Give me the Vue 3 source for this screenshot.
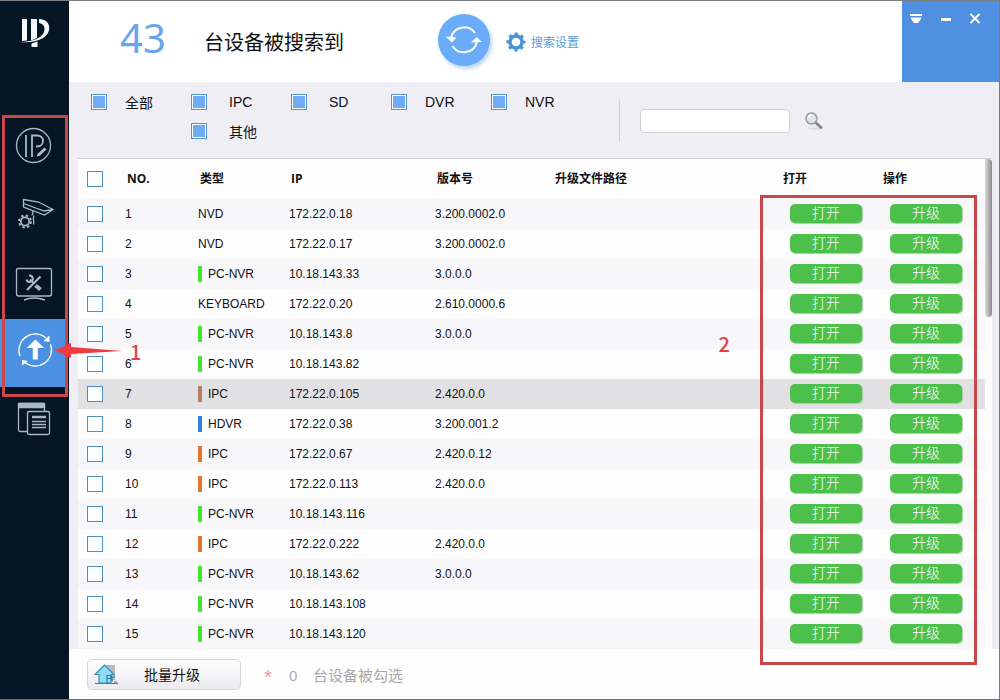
<script setup>
import { ref } from 'vue'

const filters = ref([
  { id: 'all', label: '全部', checked: true },
  { id: 'ipc', label: 'IPC', checked: true },
  { id: 'sd', label: 'SD', checked: true },
  { id: 'dvr', label: 'DVR', checked: true },
  { id: 'nvr', label: 'NVR', checked: true },
  { id: 'other', label: '其他', checked: true },
])

const devices = ref([
  { type: 'NVD', mark: '', ip: '172.22.0.18', version: '3.200.0002.0' },
  { type: 'NVD', mark: '', ip: '172.22.0.17', version: '3.200.0002.0' },
  { type: 'PC-NVR', mark: 'green', ip: '10.18.143.33', version: '3.0.0.0' },
  { type: 'KEYBOARD', mark: '', ip: '172.22.0.20', version: '2.610.0000.6' },
  { type: 'PC-NVR', mark: 'green', ip: '10.18.143.8', version: '3.0.0.0' },
  { type: 'PC-NVR', mark: 'green', ip: '10.18.143.82', version: '' },
  { type: 'IPC', mark: 'brown', ip: '172.22.0.105', version: '2.420.0.0', current: true },
  { type: 'HDVR', mark: 'blue', ip: '172.22.0.38', version: '3.200.001.2' },
  { type: 'IPC', mark: 'orange', ip: '172.22.0.67', version: '2.420.0.12' },
  { type: 'IPC', mark: 'orange', ip: '172.22.0.113', version: '2.420.0.0' },
  { type: 'PC-NVR', mark: 'green', ip: '10.18.143.116', version: '' },
  { type: 'IPC', mark: 'orange', ip: '172.22.0.222', version: '2.420.0.0' },
  { type: 'PC-NVR', mark: 'green', ip: '10.18.143.62', version: '3.0.0.0' },
  { type: 'PC-NVR', mark: 'green', ip: '10.18.143.108', version: '' },
  { type: 'PC-NVR', mark: 'green', ip: '10.18.143.120', version: '' },
])
</script>

<template>
  <div class="window">
    <aside class="sidebar">
      <svg class="logo" viewBox="0 0 69 114" aria-hidden="true">
        <path d="M22 19h5v21.500l-5 .5zM31 19h6v19l-6 2.500zM31.500 43.500l6-2V47h-6z" fill="#f4f9fc" />
        <path d="M39 19c6.500 0 10.200 3.500 10.200 9C49.200 37 38 43.500 20 42c14-.3 24.500-5 24.500-13 0-3.500-2-5.500-5.500-6z" fill="#f4f9fc" />
      </svg>
      <nav class="nav">
        <button class="nav-item" aria-label="IP">
          <svg viewBox="0 0 66 68" fill="none" stroke="#a9b8c4" stroke-width="1.300">
            <circle cx="33.500" cy="30.500" r="17" />
            <path d="M26 20v22M32 42V20.500h5c8 0 8 11 0 11h-1" stroke-width="1.800" />
            <path d="M35.500 42.500l1.500-4 7.500-7 3 3-7.500 7z" fill="#a9b8c4" stroke="#051523" />
          </svg>
        </button>
        <button class="nav-item" aria-label="摄像机">
          <svg viewBox="0 0 66 68" fill="none" stroke="#a9b8c4" stroke-width="1.300">
            <path d="M23.500 16.500l15 2.500 14.500 7.500-8.500 5.500-21-8zM23.500 20.500l20.500 7.500 9-1.500M32.500 28c1 3 0 4-1 4M34 32.500c-2 4 1 5-.5 9" />
            <circle cx="25" cy="38.500" r="4.200" stroke-width="1.800" />
            <circle cx="25" cy="38.500" r="6" stroke-width="2" stroke-dasharray="2.360" />
          </svg>
        </button>
        <button class="nav-item" aria-label="工具">
          <svg viewBox="0 0 66 68" fill="none" stroke="#a9b8c4" stroke-width="1.300">
            <rect x="16.500" y="17.500" width="35" height="27.500" rx="2" />
            <path d="M24 49q10-4 21 0" stroke-width="1.500" />
            <path d="M30 28.500l4 4" stroke-width="2" />
            <path d="M35.500 34.500l5 4" stroke-width="4" />
            <path d="M27 39l13.500-13.500" stroke-width="2.200" />
            <path d="M29 24.500a3.200 3.200 0 1 1-2.500 4" stroke-width="2" />
          </svg>
        </button>
        <button class="nav-item active" aria-label="升级">
          <svg viewBox="0 0 66 68" fill="none" stroke="#fff" stroke-width="1.300">
            <path d="M20 37a16.300 16.300 0 0 1 26-18M50.500 25a16.300 16.300 0 0 1-26 18" />
            <path d="M49.500 16.500v6.500l-6-1zM22 46.500V41l6 1z" fill="#fff" stroke="none" />
            <path d="M35.300 20.500l9 8.500h-6.500v11.500h-5V29h-6z" fill="#fff" stroke="none" />
          </svg>
        </button>
        <button class="nav-item" aria-label="日志">
          <svg viewBox="0 0 66 68" fill="none" stroke="#a9b8c4" stroke-width="1.300">
            <path d="M27 44.500h-7a1.500 1.500 0 0 1-1.500-1.500V18a1.500 1.500 0 0 1 1.500-1.500h23a1.500 1.500 0 0 1 1.500 1.500v6" />
            <path d="M18.500 16.500h26v4h-26z" fill="#a9b8c4" />
            <rect x="27.500" y="24.500" width="22" height="23" rx="1.500" />
            <path d="M32 30h14" stroke-width="2.500" />
            <path d="M32 34.500h14M32 37.500h14M32 40.500h14" />
          </svg>
        </button>
      </nav>
    </aside>

    <main class="main">
      <header class="top">
        <strong class="count">43</strong>
        <span class="found">台设备被搜索到</span>
        <button class="refresh" aria-label="刷新">
          <svg viewBox="0 0 52 52" fill="none" stroke="#fff" stroke-width="2">
            <path d="M13 23.500A13.500 13.500 0 0 1 37 19M39 28A13.500 13.500 0 0 1 14.500 32" />
            <path d="M7.500 22.500l11 1-4.500 5zM33 28.500l11-.5-5.500-5z" fill="#fff" stroke="none" />
          </svg>
        </button>
        <a class="settings" href="#">
          <svg viewBox="0 0 20 20" fill="none" stroke="#4d92d3" aria-hidden="true">
            <circle cx="10" cy="10" r="6" stroke-width="3.400" />
            <circle cx="10" cy="10" r="8.200" stroke-width="2.600" stroke-dasharray="3.200 3.240" stroke-dashoffset="1.600" />
          </svg>
          <span>搜索设置</span>
        </a>
        <div class="controls">
          <button aria-label="菜单">
            <svg viewBox="0 0 12 12" fill="#fff"><path d="M0 1h12v2H0zM1 4.500h10v1.500L8 10H4L1 6z" /></svg>
          </button>
          <button aria-label="最小化">
            <svg viewBox="0 0 12 12" fill="#fff"><path d="M1 5h10v3H1z" /></svg>
          </button>
          <button aria-label="关闭">
            <svg viewBox="0 0 12 12" stroke="#fff" stroke-width="1.800"><path d="M1.500 1l9 9M10.500 1l-9 9" /></svg>
          </button>
        </div>
      </header>

      <section class="filters">
        <div class="types">
          <label v-for="f in filters" :key="f.id" :class="['type', f.id]">
            <input v-model="f.checked" type="checkbox" class="box filled" />
            <span>{{ f.label }}</span>
          </label>
        </div>
        <form class="search" @submit.prevent>
          <input type="text" aria-label="搜索" />
          <button aria-label="搜索">
            <svg viewBox="0 0 20 20" fill="none">
              <ellipse cx="11" cy="17.500" rx="7" ry="1" fill="#d9dadd" />
              <path d="M11.500 11.500l5.500 5" stroke="#85878b" stroke-width="3" stroke-linecap="round" />
              <circle cx="7.500" cy="7.500" r="5.500" fill="#dfe5e9" stroke="#999da2" stroke-width="1.500" />
              <path d="M4.500 7a3 3 0 0 1 3-3" stroke="#fff" stroke-width="1.500" />
            </svg>
          </button>
        </form>
      </section>

      <section class="list">
        <table>
          <colgroup>
            <col class="c-check" /><col class="c-no" /><col class="c-type" /><col class="c-ip" />
            <col class="c-version" /><col /><col class="c-open" /><col class="c-upgrade" />
          </colgroup>
          <thead>
            <tr>
              <th><input type="checkbox" class="box" aria-label="全选" /></th>
              <th>NO.</th>
              <th>类型</th>
              <th>IP</th>
              <th>版本号</th>
              <th>升级文件路径</th>
              <th>打开</th>
              <th>操作</th>
            </tr>
          </thead>
          <tbody>
            <tr v-for="(d, i) in devices" :key="d.ip" :class="{ current: d.current }">
              <td><input type="checkbox" class="box" :aria-label="d.ip" /></td>
              <td>{{ i + 1 }}</td>
              <td>
                <div class="kind"><i v-if="d.mark" :class="['mark', d.mark]"></i>{{ d.type }}</div>
              </td>
              <td>{{ d.ip }}</td>
              <td>{{ d.version }}</td>
              <td></td>
              <td class="action"><button>打开</button></td>
              <td class="action"><button>升级</button></td>
            </tr>
          </tbody>
        </table>
        <div class="scroll"><div class="thumb"></div></div>
      </section>

      <footer class="bottom">
        <button class="batch">
          <svg viewBox="0 0 26 24" aria-hidden="true">
            <path d="M11 3h11v15H11z" fill="#b3b9bd" />
            <path d="M11.500 3L2 12.500h4V21h12v-8.500h3z" fill="#8fdcf5" stroke="#3f8db8" stroke-width="1.200" />
            <path d="M2 21.500h23M14 13v8M14 13.500h4v3h-4M19 20v-5h3M21 20h3" fill="none" stroke="#3b7b9c" stroke-width="1.200" />
          </svg>
          <span>批量升级</span>
        </button>
        <span class="star">*</span>
        <span class="zero">0</span>
        <span class="selected">台设备被勾选</span>
      </footer>
    </main>

    <div class="frame frame-nav"></div>
    <div class="frame frame-actions"></div>
    <svg class="arrow" viewBox="0 0 68 20" aria-hidden="true">
      <path d="M0 10.500L16 3v4l51 4-51 3v4z" fill="#f03a3e" />
    </svg>
    <span class="note note-one">1</span>
    <span class="note note-two">2</span>
  </div>
</template>

<style>
body {
  background: #fff;
}
</style>

<style scoped>
* {
  box-sizing: border-box;
}
.window {
  position: relative;
  display: flex;
  min-height: 100vh;
  border-top: 1px solid #7d8186;
  border-bottom: 1px solid #6f7174;
  font-family: "Liberation Sans", "Noto Sans CJK SC", sans-serif;
  font-size: 12px;
  color: #111;
}
button {
  padding: 0;
  border: 0;
  background: none;
  font-family: inherit;
  color: inherit;
}
svg {
  display: block;
}
.sidebar {
  flex: 0 0 69px;
  background: #051523;
}
.logo {
  width: 69px;
  height: 114px;
  margin-top: -1px;
}
.nav {
  display: flex;
  flex-direction: column;
  padding-top: 1px;
}
.nav-item {
  width: 66px;
  height: 68px;
}
.nav-item svg {
  width: 66px;
  height: 68px;
}
.nav-item.active {
  background: #4c91e1;
}
.main {
  flex: 1;
  min-width: 0;
  display: flex;
  flex-direction: column;
  border-right: 1px solid #77797c;
  background: #eeeef4;
}
.top {
  display: flex;
  align-items: center;
  height: 81px;
  padding-left: 51px;
  background: #fff;
}
.count {
  width: 84px;
  font: 400 40px/48px "Noto Sans", sans-serif;
  color: #69a5ec;
  padding-bottom: 8px;
}
.found {
  width: 234px;
  padding-top: 2px;
  font-size: 20px;
  line-height: 30px;
}
.refresh {
  width: 52px;
  height: 52px;
  margin-bottom: 3px;
  border-radius: 50%;
  background: #6aacf9;
  box-shadow: 2px 3px 4px #bcd5f0;
}
.settings {
  display: flex;
  align-items: center;
  gap: 5px;
  margin-left: 16px;
  color: #5c9ad2;
  text-decoration: none;
}
.settings svg {
  width: 20px;
  height: 20px;
}
.controls {
  display: flex;
  align-self: stretch;
  align-items: flex-start;
  justify-content: space-between;
  width: 97px;
  margin-left: auto;
  padding: 12px 18px 0 8px;
  background: #4f91e0;
}
.controls svg {
  width: 12px;
  height: 12px;
}
.filters {
  display: flex;
  justify-content: space-between;
  height: 76px;
  padding: 5px 209px 0 22px;
}
.types {
  display: grid;
  grid-template-columns: repeat(5, 100px);
  grid-auto-rows: 29px;
}
.type {
  display: flex;
  align-items: center;
  gap: 18px;
  font-size: 14px;
}
.type.other {
  grid-column: 2;
}
.type.ipc,
.type.sd,
.type.other {
  gap: 22px;
}
.box {
  appearance: none;
  flex: none;
  display: block;
  width: 16px;
  height: 16px;
  margin: 0;
  border: 1px solid #4d8fc0;
  background: #fafeff;
}
.box.filled {
  border-color: #5494d4;
}
.box:checked {
  background: #6fabf7;
  box-shadow: inset 0 0 0 1px #fff;
}
.search {
  display: flex;
  flex: none;
  align-items: center;
  height: 42px;
  margin-top: 13px;
  padding-left: 20px;
  border-left: 1px solid #cfcfd6;
}
.types {
  flex: none;
}
.search input {
  width: 150px;
  height: 24px;
  border: 1px solid #d0d0d8;
  border-radius: 4px;
  background: #fff;
}
.search button {
  margin-left: 14px;
  margin-right: -34px;
}
.search svg {
  width: 20px;
  height: 20px;
}
.list {
  display: flex;
  margin: 0 7px 0 9px;
  border-top: 1px solid #cfcfd6;
  background: #fdfdfe;
}
table {
  flex: 1;
  table-layout: fixed;
  border-collapse: collapse;
}
.c-check {
  width: 47px;
}
.c-no {
  width: 73px;
}
.c-type {
  width: 91px;
}
.c-ip {
  width: 146px;
}
.c-version {
  width: 118px;
}
.c-open {
  width: 100px;
}
.c-upgrade {
  width: 104px;
}
th,
td {
  padding: 0;
  text-align: left;
}
th {
  height: 40px;
  padding-left: 2px;
  font: 700 12px/18px "Open Sans", "Noto Sans CJK SC", sans-serif;
}
td {
  height: 30px;
}
th:first-child,
td:first-child {
  padding-left: 9px;
}
tbody tr:nth-child(odd) {
  background: #f7f7fa;
}
tbody tr.current {
  background: #e1e1e4;
}
.kind {
  display: flex;
  align-items: center;
}
.mark {
  width: 4px;
  height: 16px;
  margin-right: 6px;
}
.green {
  background: #43e52f;
}
.brown {
  background: #b97b60;
}
.blue {
  background: #2f82e0;
}
.orange {
  background: #e07630;
}
.action {
  padding: 0 0 2px 9px;
}
.action button {
  display: block;
  width: 72px;
  height: 19px;
  border-radius: 5px;
  background: #4dbf4b;
  box-shadow: 1px 1px 1px #a6cfa6;
  color: #fff;
  font-size: 14px;
  font-weight: 300;
  line-height: 19px;
}
.scroll {
  flex: 0 0 7px;
}
.thumb {
  height: 158px;
  border-radius: 0 4px 4px 4px;
  background: linear-gradient(90deg, #dcdcde, #8a8a8e);
}
.bottom {
  flex: 1;
  display: flex;
  align-items: center;
  min-height: 49px;
  padding-left: 18px;
  background: #fefefe;
  color: #a9a9ad;
}
.batch {
  display: flex;
  align-items: center;
  gap: 25px;
  width: 154px;
  height: 31px;
  padding-left: 5px;
  border: 1px solid #d6d6dc;
  border-radius: 5px;
  background: linear-gradient(#fdfdfe, #ebebef);
  color: #111;
  font-size: 14px;
}
.batch svg {
  width: 26px;
  height: 24px;
}
.star {
  width: 25px;
  margin-left: 23px;
  padding-top: 6px;
  font-size: 20px;
  line-height: 20px;
  color: #ed9a9c;
}
.zero {
  width: 24px;
  padding-top: 2px;
  font-size: 15px;
}
.selected {
  font-size: 15px;
}
.frame {
  position: absolute;
  border: 3px solid #c9474a;
  pointer-events: none;
}
.frame-nav {
  left: 2px;
  top: 114px;
  width: 66px;
  height: 282px;
}
.frame-actions {
  right: 23px;
  top: 194px;
  width: 217px;
  height: 470px;
}
.arrow {
  position: absolute;
  left: 55px;
  top: 339px;
  width: 68px;
  height: 20px;
}
.note {
  position: absolute;
  font: 500 20px/20px "Noto Sans CJK SC", sans-serif;
  color: #dc4347;
}
.note-one {
  left: 130px;
  top: 341px;
}
.note-two {
  right: 270px;
  top: 333px;
}
</style>
